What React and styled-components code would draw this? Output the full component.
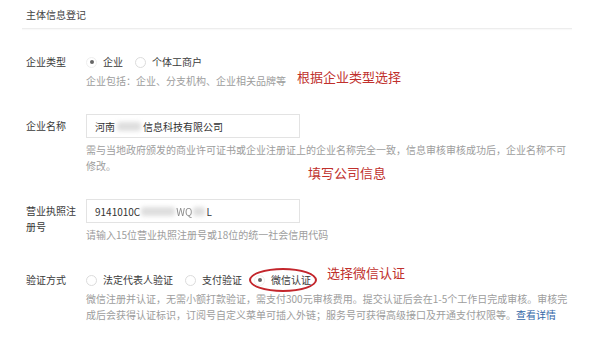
import React from 'react';
import styled, { createGlobalStyle } from 'styled-components';

const Global = createGlobalStyle`
  html, body { margin: 0; padding: 0; background: #fff; }
  body {
    font-family: "Noto Sans CJK SC", "Noto Sans", sans-serif;
    font-size: 10px;
    color: #333;
  }
`;

const Page = styled.div`
  width: 550px;
  margin-left: 22px;
  height: 343px;
  overflow: hidden;
`;

const Header = styled.div`
  height: 28px;
  display: flex;
  align-items: center;
  padding-left: 4px;
  color: #444;
  border-bottom: 1px solid #ededed;
  box-shadow: 0 1px 1px rgba(0, 0, 0, 0.025);
`;

const Form = styled.div`
  padding-left: 4px;
`;

const Row = styled.div`
  display: flex;
  align-items: flex-start;
  margin-top: ${p => p.$mt}px;
`;

const Label = styled.div`
  width: 52px;
  margin-right: 8px;
  flex-shrink: 0;
  line-height: 16px;
  padding-top: ${p => p.$pt || 0}px;
  color: #3a3a3a;
`;

const Field = styled.div`
  position: relative;
  flex: 1;
`;

const Options = styled.div`
  display: flex;
  align-items: center;
  height: 16px;
`;

const Option = styled.span`
  position: relative;
  display: inline-flex;
  align-items: center;
  margin-right: 12px;
  line-height: 16px;
  color: #3a3a3a;
  &::after {
    content: '';
    display: ${p => (p.$circled ? 'block' : 'none')};
    position: absolute;
    left: -5px;
    right: -6px;
    top: -4px;
    bottom: -4px;
    border: 2px solid #c3262c;
    border-radius: 50%;
  }
`;

const Radio = styled.span`
  width: 11px;
  height: 11px;
  box-sizing: border-box;
  border-radius: 50%;
  border: 1px solid ${p => (p.$checked ? '#eeeeee' : '#dcdcdc')};
  margin-right: 6px;
  display: inline-flex;
  align-items: center;
  justify-content: center;
  &::after {
    content: '';
    width: 4px;
    height: 4px;
    border-radius: 50%;
    background: ${p => (p.$checked ? '#666' : 'transparent')};
  }
`;

const Help = styled.div`
  width: 484px;
  margin-top: ${p => p.$mt}px;
  line-height: 16px;
  color: #9d9d9d;
`;

const Link = styled.a`
  color: #3568a8;
  text-decoration: none;
`;

const Input = styled.div`
  width: 214px;
  height: 24px;
  box-sizing: border-box;
  border: 1px solid #e3e3e3;
  padding-left: 8px;
  display: flex;
  align-items: center;
  color: #333;
  white-space: nowrap;
`;

const Redact = styled.span`
  display: inline-block;
  width: ${p => p.$w}px;
  height: 9px;
  margin: 0 ${p => p.$m || 0}px;
  background: #dedede;
  border-radius: 3px;
  filter: blur(2px);
`;

const Faint = styled.span`
  color: #8a8a8a;
  filter: blur(0.6px);
`;

const Note = styled.span`
  position: absolute;
  left: ${p => p.$x}px;
  top: ${p => p.$y}px;
  font-size: 13px;
  line-height: 16px;
  color: #c0302c;
  white-space: nowrap;
`;

export default function App() {
  return (
    <>
      <Global />
      <Page>
        <Header>主体信息登记</Header>
        <Form>
          <Row $mt={25}>
            <Label>企业类型</Label>
            <Field>
              <Options>
                <Option><Radio $checked />企业</Option>
                <Option><Radio />个体工商户</Option>
              </Options>
              <Help $mt={3}>企业包括：企业、分支机构、企业相关品牌等</Help>
              <Note $x={211} $y={15}>根据企业类型选择</Note>
            </Field>
          </Row>

          <Row $mt={25}>
            <Label $pt={4}>企业名称</Label>
            <Field>
              <Input>
                河南<Redact $w={24} $m={2} />信息科技有限公司
              </Input>
              <Help $mt={4}>
                需与当地政府颁发的商业许可证书或企业注册证上的企业名称完全一致，信息审核审核成功后，企业名称不可修改。
              </Help>
              <Note $x={222} $y={51}>填写公司信息</Note>
            </Field>
          </Row>

          <Row $mt={25}>
            <Label $pt={4}>营业执照注册号</Label>
            <Field>
              <Input>
                9141010C<Redact $w={34} $m={1} />
                <Faint>WQ</Faint>
                <Redact $w={12} $m={1} />L
              </Input>
              <Help $mt={4}>请输入15位营业执照注册号或18位的统一社会信用代码</Help>
            </Field>
          </Row>

          <Row $mt={29}>
            <Label>验证方式</Label>
            <Field>
              <Options>
                <Option><Radio />法定代表人验证</Option>
                <Option><Radio />支付验证</Option>
                <Option $circled><Radio $checked />微信认证</Option>
              </Options>
              <Help $mt={3}>
                微信注册并认证，无需小额打款验证，需支付300元审核费用。提交认证后会在1-5个工作日完成审核。审核完成后会获得认证标识，订阅号自定义菜单可插入外链；服务号可获得高级接口及开通支付权限等。
                <Link>查看详情</Link>
              </Help>
              <Note $x={241} $y={-7}>选择微信认证</Note>
            </Field>
          </Row>
        </Form>
      </Page>
    </>
  );
}
